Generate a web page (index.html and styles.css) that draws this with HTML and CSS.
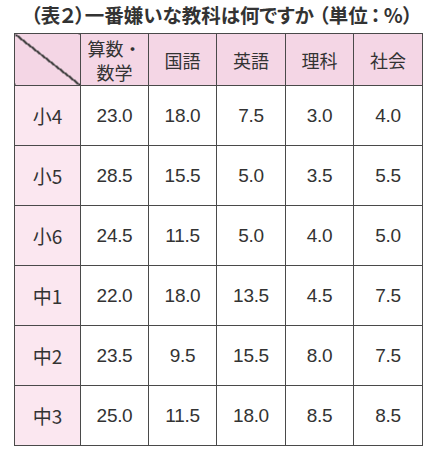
FILE: index.html
```html
<!DOCTYPE html>
<html lang="ja">
<head>
<meta charset="utf-8">
<link rel="stylesheet" href="styles.css">
</head>
<body>
<div class="page">
  <h1 class="title">（表２）一番嫌いな教科は何ですか<span class="unit">（単位<span class="colon">：</span>％）</span></h1>
  <table class="grid">
    <colgroup>
      <col class="c-label"><col class="c1"><col class="c2"><col class="c3"><col class="c4"><col class="c5">
    </colgroup>
    <thead>
      <tr>
        <th class="corner"></th>
        <th class="two">算数・<br>数学</th>
        <th>国語</th>
        <th>英語</th>
        <th>理科</th>
        <th>社会</th>
      </tr>
    </thead>
    <tbody>
      <tr><th class="row">小4</th><td>23.0</td><td>18.0</td><td>7.5</td><td>3.0</td><td>4.0</td></tr>
      <tr><th class="row">小5</th><td>28.5</td><td>15.5</td><td>5.0</td><td>3.5</td><td>5.5</td></tr>
      <tr><th class="row">小6</th><td>24.5</td><td>11.5</td><td>5.0</td><td>4.0</td><td>5.0</td></tr>
      <tr><th class="row">中1</th><td>22.0</td><td>18.0</td><td>13.5</td><td>4.5</td><td>7.5</td></tr>
      <tr><th class="row">中2</th><td>23.5</td><td>9.5</td><td>15.5</td><td>8.0</td><td>7.5</td></tr>
      <tr><th class="row">中3</th><td>25.0</td><td>11.5</td><td>18.0</td><td>8.5</td><td>8.5</td></tr>
    </tbody>
  </table>
</div>
</body>
</html>
```

FILE: styles.css
```css
html, body {
  margin: 0;
  padding: 0;
  background: #ffffff;
}

.page {
  width: 437px;
  height: 450px;
  overflow: hidden;
  font-family: "Noto Sans CJK JP", "Noto Sans", sans-serif;
  color: #333333;
}

.title {
  margin: 0;
  padding: 0 0 0 31px;
  height: 33px;
  line-height: 30px;
  font-size: 19.5px;
  font-weight: bold;
  text-align: left;
  font-feature-settings: "palt";
  letter-spacing: 0;
  color: #333333;
  white-space: nowrap;
}

.title .unit {
  margin-left: 5px;
}

.title .colon {
  margin: 0 3px;
}

.grid {
  margin-left: 14px;
  width: 408px;
  table-layout: fixed;
  border-collapse: collapse;
}

.c-label { width: 66px; }
.c1 { width: 68px; }
.c2 { width: 68px; }
.c3 { width: 69px; }
.c4 { width: 68px; }
.c5 { width: 69px; }

.grid th,
.grid td {
  border: 1.5px solid #4a4a4a;
  padding: 0;
  text-align: center;
  vertical-align: middle;
}

.grid thead th {
  height: 50px;
  background: #f4d6e5;
  font-size: 18px;
  font-weight: normal;
  line-height: 24px;
  color: #333333;
}

.grid thead th.two {
  line-height: 24px;
  padding-top: 1px;
}

.grid thead th.corner {
  background:
    linear-gradient(to top right, transparent calc(50% - 1px), #3c3c3c calc(50% - 1px), #3c3c3c calc(50% + 1px), transparent calc(50% + 1px)),
    #f4d6e5;
}

.grid tbody tr {
  height: 60px;
}

.grid tbody th.row {
  background: #fbe7f0;
  font-size: 19px;
  font-weight: normal;
  color: #333333;
}

.grid tbody td {
  font-family: "Liberation Sans", Arial, sans-serif;
  font-size: 19px;
  letter-spacing: -0.3px;
  color: #333333;
  background: #ffffff;
}
```
